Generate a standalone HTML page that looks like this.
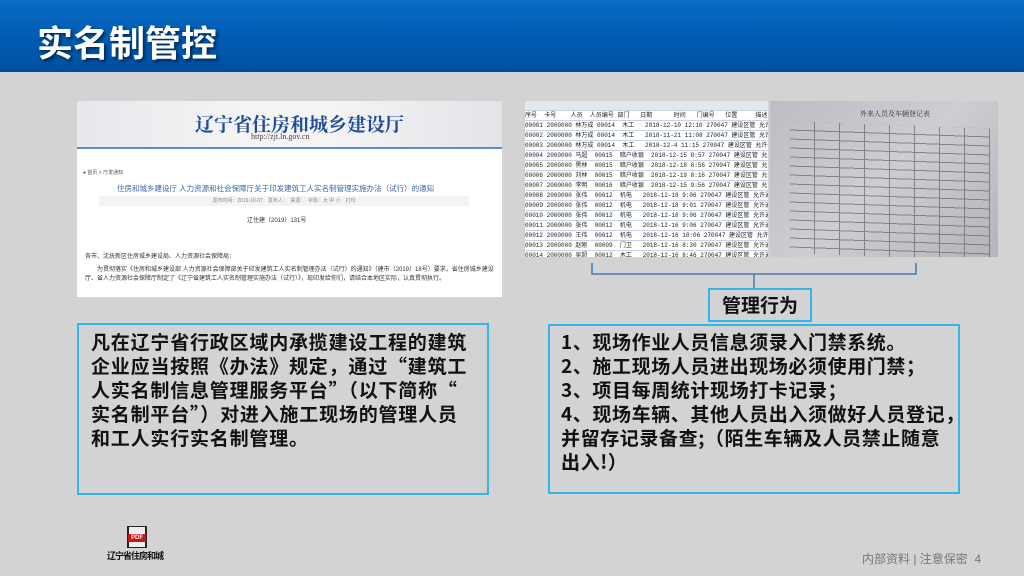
<!DOCTYPE html>
<html><head><meta charset="utf-8"><style>
*{margin:0;padding:0;box-sizing:border-box}
body{width:1024px;height:576px;overflow:hidden;background:#d3d3d3;font-family:"Liberation Sans","Noto Sans CJK SC",sans-serif;position:relative}
.hdr{position:absolute;left:0;top:0;width:1024px;height:72px;background:linear-gradient(180deg,#0a6cc4 0%,#0059b0 60%,#004f9e 100%)}
.hdr h1{position:absolute;left:37px;top:15px;font-size:36px;color:#fff;font-weight:bold;text-shadow:2px 2px 3px rgba(0,0,0,.55);letter-spacing:0px}
.box{position:absolute;border:2px solid #35b4e8;font-weight:bold;color:#111;font-size:19px;line-height:24px;white-space:nowrap;font-family:"Noto Sans CJK SC",sans-serif}
.abs{position:absolute}
</style></head><body>
<div class="hdr"><h1>实名制管控</h1></div>

<div class="abs" style="left:77px;top:101px;width:425px;height:196px;background:#fff;overflow:hidden">
 <div class="abs" style="left:0;top:0;width:425px;height:46px;background:linear-gradient(90deg,#e6e8ec,#f4f4f4 40%,#f4f4f4 60%,#e2e4e8)"></div>
 <div class="abs" style="left:0;top:46px;width:425px;height:2px;background:#5b8fc9"></div>
 <div class="abs" style="left:118px;top:9px;font-size:19px;font-weight:bold;color:#1f4c9a;font-family:'Noto Serif CJK SC',serif">辽宁省住房和城乡建设厅</div>
 <div class="abs" style="left:174px;top:31px;font-size:8px;color:#444;font-family:'Liberation Serif',serif">http://zjt.ln.gov.cn</div>
 <div class="abs" style="left:6px;top:68px;font-size:5px;color:#555">● 首页 &gt; 厅发通知</div>
 <div class="abs" style="left:40px;top:82px;font-size:7.5px;color:#3a66a8">住房和城乡建设厅 人力资源和社会保障厅关于印发建筑工人实名制管理实施办法（试行）的通知</div>
 <div class="abs" style="left:22px;top:95px;width:370px;height:10px;background:#f3f3f3;font-size:5px;color:#888;text-align:center;line-height:10px">发布时间：2019-10-07　发布人：　来源：　字体：大 中 小　打印</div>
 <div class="abs" style="left:170px;top:114px;font-size:6px;color:#333">辽住建〔2019〕131号</div>
 <div class="abs" style="left:8px;top:150px;font-size:6px;color:#333">各市、沈抚新区住房城乡建设局、人力资源社会保障局：</div>
 <div class="abs" style="left:8px;top:165px;width:410px;font-size:6px;line-height:9px;color:#333">　　为贯彻落实《住房和城乡建设部 人力资源社会保障部关于印发建筑工人实名制管理办法（试行）的通知》（建市〔2019〕18号）要求，省住房城乡建设厅、省人力资源社会保障厅制定了《辽宁省建筑工人实名制管理实施办法（试行）》，现印发给你们，请结合本地区实际，认真贯彻执行。</div>
</div>

<div class="abs" style="left:525px;top:101px;width:243px;height:156px;background:#fff;overflow:hidden;background-image:repeating-linear-gradient(180deg,transparent 0 9px,#c9d3e3 9px 10px);">
 <div class="abs" style="left:0;top:0;width:243px;height:9px;background:#e4e8ee"></div>
 <div style="position:absolute;left:0;top:10px;width:243px;font-size:6px;line-height:10px;color:#222;white-space:pre;font-family:'Liberation Mono','Noto Sans CJK SC',monospace">序号  卡号    人员  人员编号 部门   日期      时间   门编号   位置     描述    类型
00001 2000000 林万成 00014  木工   2018-12-10 12:10 270047 建设区管 允许通过 入厂
00002 2000000 林万成 00014  木工   2018-11-21 11:08 270047 建设区管 允许通过 出厂
00003 2000000 林万成 00014  木工   2018-12-4 11:15 270047 建设区管 允许通过 出厂
00004 2000000 马超  00015  暗户收银  2018-12-15 8:57 270047 建设区管 允许通过 入厂
00005 2000000 黑林  00015  暗户收银  2018-12-18 8:56 270047 建设区管 允许通过 出厂
00006 2000000 刘林  00015  暗户收银  2018-12-19 8:16 270047 建设区管 允许通过 出厂
00007 2000000 李明  00016  暗户收银  2018-12-15 9:56 270047 建设区管 允许通过 入厂
00008 2000000 张伟  00012  机电   2018-12-18 9:06 270047 建设区管 允许通过 入厂
00009 2000000 张伟  00012  机电   2018-12-18 9:01 270047 建设区管 允许通过 出厂
00010 2000000 张伟  00012  机电   2018-12-18 9:06 270047 建设区管 允许通过 出厂
00011 2000000 张伟  00012  机电   2018-12-16 9:06 270047 建设区管 允许通过 出厂
00012 2000000 王伟  00012  机电   2018-12-16 10:06 270047 建设区管 允许通过 入厂
00013 2000000 赵刚  00009  门卫   2018-12-16 8:30 270047 建设区管 允许通过 入厂
00014 2000000 吴超  00012  木工   2018-12-16 8:46 270047 建设区管 允许通过 入厂
00015 2000000 林万成 00014  木工   2018-12-16 8:46 270047 建设区管 允许通过 入厂</div>
</div>
<div class="abs" style="left:770px;top:101px;width:228px;height:156px;background:linear-gradient(135deg,#bdbcc4,#cfcdd2 50%,#b5b3ba);overflow:hidden">
 <div class="abs" style="left:90px;top:8px;font-size:7px;color:#333;font-family:'Noto Serif CJK SC',serif">外来人员及车辆登记表</div>
 <div class="abs" style="left:20px;top:24px;width:200px;height:132px;transform:skewY(2deg);background-image:repeating-linear-gradient(180deg,transparent 0 8px,#555 8px 9px),repeating-linear-gradient(90deg,transparent 0 24px,#555 24px 25px);opacity:.6"></div>
</div>

<svg class="abs" style="left:585px;top:258px" width="340" height="32"><path d="M7 5 V16 H331 V5 M169 16 V30" fill="none" stroke="#4a78b8" stroke-width="1.5"/></svg>
<div class="abs" style="left:708px;top:288px;width:104px;height:34px;border:2px solid #35b4e8;font-size:19px;font-weight:bold;text-align:center;line-height:30px;color:#111;font-family:'Noto Sans CJK SC',sans-serif">管理行为</div>

<div class="box" style="left:77px;top:323px;width:412px;height:172px;padding:5px 0 0 12px;letter-spacing:0.8px">凡在辽宁省行政区域内承揽建设工程的建筑<br>企业应当按照《办法》规定，通过“建筑工<br>人实名制信息管理服务平台”（以下简称“<br>实名制平台”）对进入施工现场的管理人员<br>和工人实行实名制管理。</div>

<div class="box" style="left:548px;top:324px;width:412px;height:170px;padding:4px 0 0 11px;letter-spacing:0.6px">1、现场作业人员信息须录入门禁系统。<br>2、施工现场人员进出现场必须使用门禁；<br>3、项目每周统计现场打卡记录；<br>4、现场车辆、其他人员出入须做好人员登记，<br>并留存记录备查;（陌生车辆及人员禁止随意<br>出入!）</div>

<div class="abs" style="left:127px;top:526px;width:20px;height:22px;background:#222"></div>
<div class="abs" style="left:129px;top:527px;width:16px;height:20px;background:#eee"></div>
<div class="abs" style="left:128px;top:534px;width:18px;height:8px;background:#d0121b;color:#fff;font-size:6px;font-weight:bold;text-align:center;line-height:8px">PDF</div>
<div class="abs" style="left:107px;top:549px;font-size:9px;font-weight:bold;color:#111;letter-spacing:-1px">辽宁省住房和城</div>

<div class="abs" style="left:862px;top:550px;font-size:12px;color:#777">内部资料 | 注意保密&nbsp;&nbsp;4</div>
</body></html>
